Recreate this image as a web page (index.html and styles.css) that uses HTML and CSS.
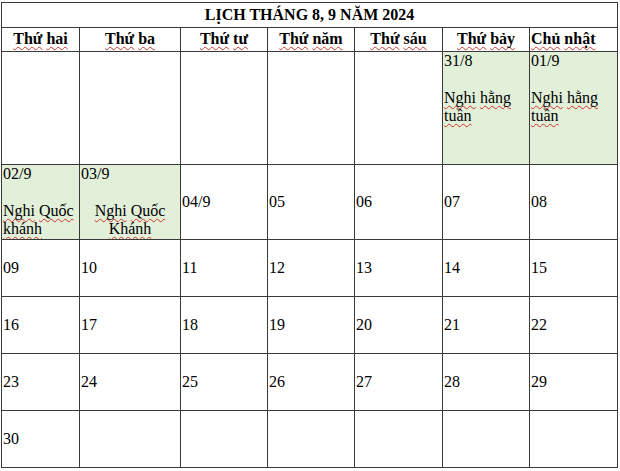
FILE: index.html
```html
<!DOCTYPE html>
<html lang="vi">
<head>
<meta charset="utf-8">
<title>Lịch tháng 8, 9 năm 2024</title>
<link rel="stylesheet" href="styles.css">
</head>
<body>
<table class="cal">
  <colgroup>
    <col class="c1"><col class="c2"><col class="c3"><col class="c4"><col class="c5"><col class="c6"><col class="c7">
  </colgroup>
  <tr class="r-title"><th colspan="7" class="title">LỊCH THÁNG 8, 9 NĂM 2024</th></tr>
  <tr class="r-head">
    <th><span class="sp">Thứ</span> <span class="sp">hai</span></th>
    <th><span class="sp">Thứ</span> <span class="sp">ba</span></th>
    <th><span class="sp">Thứ</span> <span class="sp">tư</span></th>
    <th><span class="sp">Thứ</span> <span class="sp">năm</span></th>
    <th><span class="sp">Thứ</span> <span class="sp">sáu</span></th>
    <th><span class="sp">Thứ</span> <span class="sp">bảy</span></th>
    <th class="left"><span class="sp">Chủ</span> <span class="sp">nhật</span></th>
  </tr>
  <tr class="r1">
    <td></td><td></td><td></td><td></td><td></td>
    <td class="off">31/8<br>&nbsp;<br><span class="sp">Nghi</span> <span class="sp">hằng</span><br><span class="sp">tuần</span></td>
    <td class="off">01/9<br>&nbsp;<br><span class="sp">Nghi</span> <span class="sp">hằng</span><br><span class="sp">tuần</span></td>
  </tr>
  <tr class="r2">
    <td class="off">02/9<br>&nbsp;<br><span class="sp">Nghi</span> <span class="sp">Quốc</span><br><span class="sp">khánh</span></td>
    <td class="off">03/9<br>&nbsp;<div class="center"><span class="sp">Nghi</span> <span class="sp">Quốc</span><br><span class="sp">Khánh</span></div></td>
    <td>04/9</td><td>05</td><td>06</td><td>07</td><td>08</td>
  </tr>
  <tr class="rw"><td>09</td><td>10</td><td>11</td><td>12</td><td>13</td><td>14</td><td>15</td></tr>
  <tr class="rw"><td>16</td><td>17</td><td>18</td><td>19</td><td>20</td><td>21</td><td>22</td></tr>
  <tr class="rw"><td>23</td><td>24</td><td>25</td><td>26</td><td>27</td><td>28</td><td>29</td></tr>
  <tr class="rw"><td>30</td><td></td><td></td><td></td><td></td><td></td><td></td></tr>
</table>
</body>
</html>
```
FILE: styles.css
```css
html, body {
  margin: 0;
  padding: 0;
  background: #ffffff;
}
body {
  padding: 2px 0 0 1px;
  font-family: "Liberation Serif", "Times New Roman", serif;
  font-size: 16px;
  line-height: 1.15;
  color: #000;
}
.cal {
  border-collapse: collapse;
  table-layout: fixed;
  width: 617px;
}
.cal td, .cal th {
  border: 1px solid #3a3a3a;
  padding: 0 1px;
  text-align: left;
  vertical-align: middle;
  overflow: hidden;
}
.c1 { width: 78px; }
.c2 { width: 101px; }
.c3 { width: 87px; }
.c4 { width: 87px; }
.c5 { width: 88px; }
.c6 { width: 87px; }
.c7 { width: 88px; }

.r-title { height: 25px; }
.r-head { height: 24px; }
.r1 { height: 113px; }
.r2 { height: 75px; }
.rw { height: 57px; }

.cal th {
  font-weight: bold;
  text-align: center;
}
.cal th.left { text-align: left; }
.r1 td { vertical-align: top; }
.off { background: #e2efd9; }
.center { text-align: center; }
.sp {
  text-decoration: underline wavy #d0342c;
  text-decoration-thickness: 1px;
  text-underline-offset: 2px;
  text-decoration-skip-ink: none;
}
```
